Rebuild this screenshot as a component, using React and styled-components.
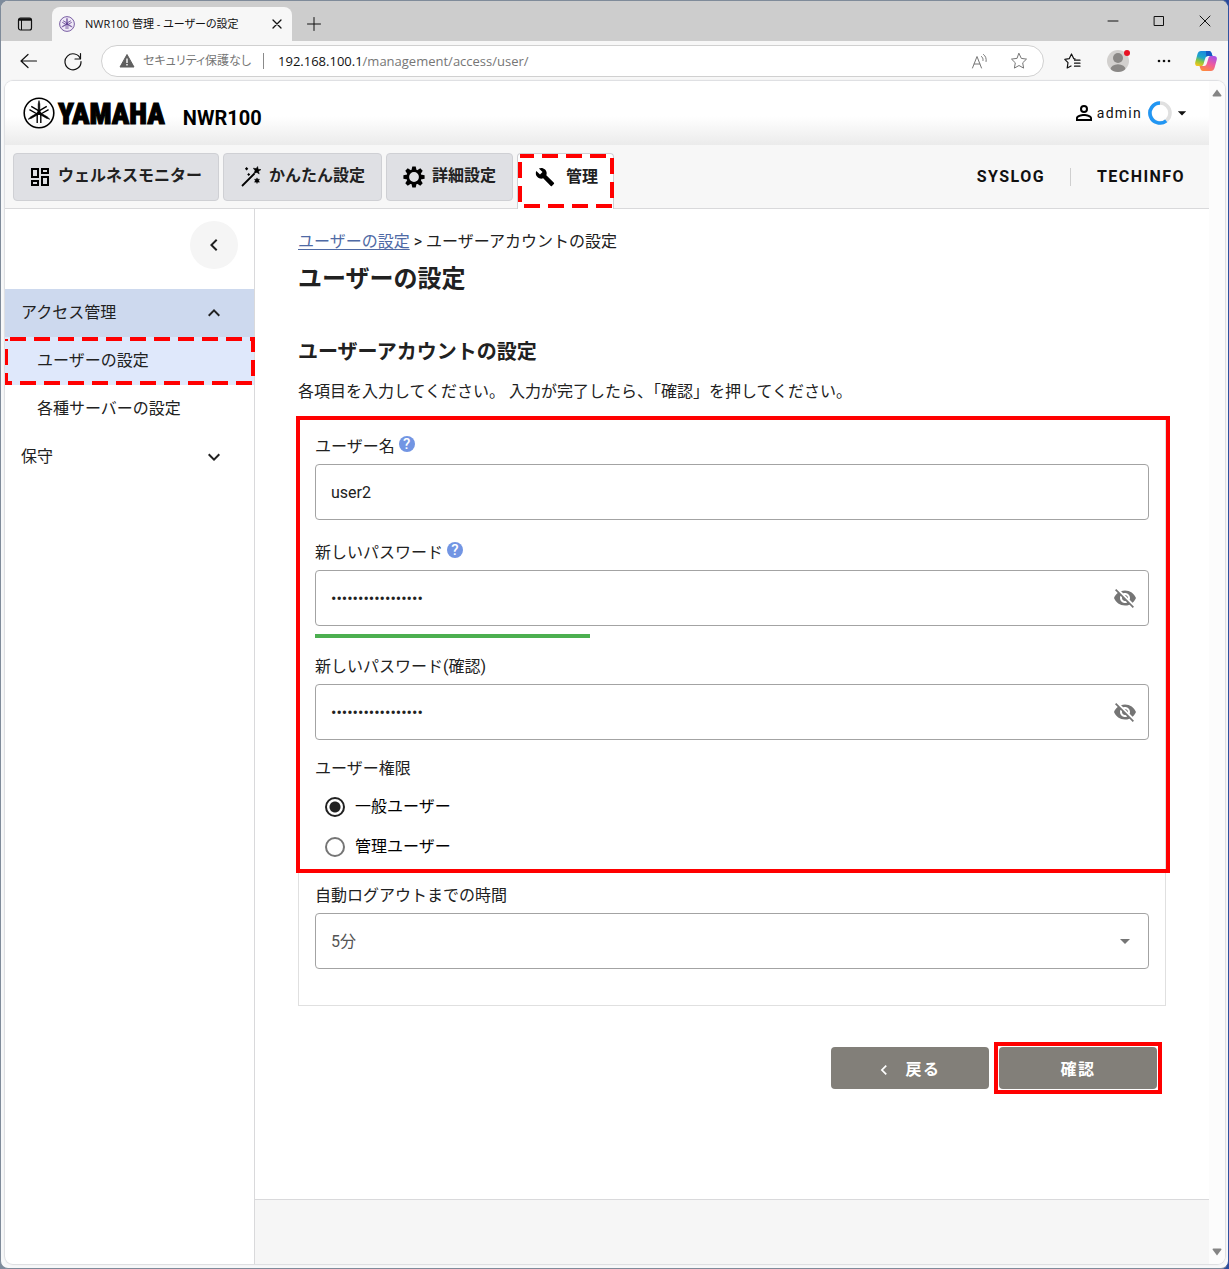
import React, { useState } from "react";
import styled, { createGlobalStyle, css } from "styled-components";

const GlobalStyle = createGlobalStyle`
  *, *::before, *::after { box-sizing: border-box; }
  html, body { margin: 0; padding: 0; }
  body {
    background: linear-gradient(90deg, #7d8b9c 0, #7d8b9c 50%, #2a4a9c 100%);
    color: #212121;
    font: 16px/24px Roboto, "Noto Sans CJK JP", sans-serif;
  }
  button, input, select { font: inherit; color: inherit; margin: 0; }
  button { border: 0; background: none; padding: 0; cursor: pointer; }
  a { color: inherit; text-decoration: none; }
  svg { display: block; flex: none; }
`;

/* ---------- browser chrome ---------- */

const Window = styled.div`
  min-height: 100vh;
  display: flex;
  flex-direction: column;
  background: #f7f8f9;
  border: 1px solid;
  border-color: #7f8b9a #2f52a0 #7f8b9a #7f8b9a;
  border-radius: 8px;
  overflow: hidden;
`;

const TitleBar = styled.div`
  display: flex;
  height: 40px;
  background: #cdcdcd;
  padding-left: 16px;
`;

const TabMenu = styled.button`
  width: 35px;
  padding-top: 6px;
`;

const Tab = styled.div`
  display: flex;
  align-items: center;
  align-self: flex-end;
  width: 240px;
  height: 34px;
  padding: 0 7px;
  border-radius: 8px 8px 0 0;
  background: #f7f7f7;
  gap: 10px;
`;

const TabTitle = styled.span`
  flex: 1;
  font: 11px/16px "Open Sans", "Noto Sans CJK JP", sans-serif;
  font-feature-settings: "palt";
  color: #111;
  white-space: nowrap;
`;

const NewTab = styled.button`
  width: 43px;
  display: grid;
  place-items: center;
  padding-top: 6px;
`;

const WindowButtons = styled.div`
  display: flex;
  margin-left: auto;
`;

const WindowButton = styled.button`
  width: 46px;
  display: grid;
  place-items: center;
`;

const Toolbar = styled.div`
  display: flex;
  align-items: center;
  height: 40px;
  padding: 0 7px 0 18px;
  background: #f7f7f7;
`;

const ToolButton = styled.button`
  width: ${(p) => p.$w}px;
  height: 32px;
  display: flex;
  align-items: center;
  justify-content: ${(p) => (p.$left ? "flex-start" : "center")};
  color: #111;
`;

const AddressBar = styled.div`
  flex: 1;
  display: flex;
  align-items: center;
  height: 32px;
  padding: 0 10px 0 17px;
  border: 1px solid #d0d0d0;
  border-radius: 16px;
  background: #fff;
  color: #767676;
`;

const SiteNotice = styled.span`
  margin-left: 8px;
  padding-right: 12px;
  border-right: 1px solid #8a8a8a;
  font: 12px/16px "Open Sans", "Noto Sans CJK JP", sans-serif;
  font-feature-settings: "palt";
  white-space: nowrap;
`;

const UrlText = styled.span`
  flex: 1;
  margin-left: 14px;
  font: 13px/20px "Open Sans", sans-serif;
  white-space: nowrap;
  b { font-weight: 400; color: #111; }
`;

const AddressIcon = styled.button`
  width: 40px;
  display: flex;
  justify-content: center;
  color: #767676;
  &:last-child { width: 28px; margin-left: 6px; }
`;

/* ---------- page frame ---------- */

const Viewport = styled.div`
  flex: 1;
  display: flex;
  margin: 0 3px 4px 4px;
  border-radius: 8px;
  background: #fff;
  overflow: hidden;
  box-shadow: 0 0 1px 1px #dcdde0;
`;

const Page = styled.div`
  flex: 1;
  min-width: 0;
  display: flex;
  flex-direction: column;
`;

const ScrollTrack = styled.div`
  width: 16px;
  display: flex;
  flex-direction: column;
  justify-content: space-between;
  align-items: center;
  padding: 8px 0;
  background: #fcfcfc;
`;

const Header = styled.header`
  display: flex;
  align-items: center;
  height: 64px;
  padding: 0 17px 0 18px;
  background: linear-gradient(#fff 55%, #ebebeb);
`;

const Wordmark = styled.span`
  margin-left: 3px;
  padding-top: 2px;
  font: 900 29px/40px "Liberation Sans Narrow", "Roboto Condensed", "Open Sans Condensed", "Noto Sans CJK JP", sans-serif;
  color: #000;
  -webkit-text-stroke: 1px #000;
`;

const ModelName = styled.span`
  margin: 10px 0 0 18px;
  font-size: 20px;
  font-weight: 700;
  color: #000;
`;

const UserMenu = styled.button`
  display: flex;
  align-items: center;
  margin-left: auto;
  font-size: 14px;
  letter-spacing: 0.09em;
  color: #111;
`;

const UserName = styled.span`
  margin: 0 6px 0 1px;
`;

const NavBar = styled.nav`
  display: flex;
  height: 64px;
  padding: 8px 24px 0 8px;
  gap: 4px;
  border-bottom: 1px solid #d9d9db;
  background: #f7f7f7;
`;

const NavItem = styled.a`
  position: relative;
  display: flex;
  align-items: center;
  gap: 6px;
  height: 48px;
  padding: 0 16px 2px 14px;
  border: 1px solid #cfd0d4;
  border-radius: 4px;
  background: #dfe0e4;
  font-weight: 700;
  color: #212121;
  white-space: nowrap;
  svg { margin-top: 1px; color: #000; }
  ${(p) =>
    p.$wide &&
    css`
      padding-left: 15px;
    `}
  ${(p) =>
    p.$active &&
    css`
      height: 56px;
      gap: 11px;
      padding: 0 15px 10px 17px;
      border-bottom: 0;
      border-radius: 4px 4px 0 0;
      background: #fff;
    `}
`;

const NavLinks = styled.div`
  display: flex;
  align-items: center;
  height: 48px;
  margin-left: auto;
`;

const NavLink = styled.a`
  font-weight: 700;
  letter-spacing: 0.09em;
  color: #111;
`;

const NavDivider = styled.span`
  width: 1px;
  height: 18px;
  margin: 0 26px 0 25px;
  background: #cfcfcf;
`;

const Body = styled.div`
  flex: 1;
  display: flex;
`;

const Sidebar = styled.aside`
  width: 250px;
  flex: none;
  display: flex;
  flex-direction: column;
  padding-top: 12px;
  border-right: 1px solid #d9d9db;
`;

const Collapse = styled.button`
  align-self: flex-end;
  display: grid;
  place-items: center;
  width: 48px;
  height: 48px;
  margin: 0 16px 20px 0;
  border-radius: 50%;
  background: #f5f5f5;
`;

const SideGroup = styled.button`
  display: flex;
  align-items: center;
  justify-content: space-between;
  height: 48px;
  padding: 0 28px 0 16px;
  background: ${(p) => (p.$open ? "#cdd9ee" : "transparent")};
`;

const SideLink = styled.a`
  position: relative;
  display: flex;
  align-items: center;
  height: 48px;
  padding-left: 32px;
  background: ${(p) => (p.$current ? "#dfe8fb" : "transparent")};
`;

const Column = styled.div`
  flex: 1;
  min-width: 0;
  display: flex;
  flex-direction: column;
`;

const Main = styled.main`
  flex: 1;
  padding: 21px 43px 40px;
`;

const Footer = styled.footer`
  height: 65px;
  border-top: 1px solid #d9d9db;
  background: #f6f6f6;
`;

/* ---------- form ---------- */

const CrumbLink = styled.a`
  color: #4f6aa5;
  text-decoration: underline;
  text-underline-offset: 2px;
`;

const Title = styled.h1`
  margin: 8px 0 0;
  font-size: 24px;
  line-height: 34px;
`;

const Subtitle = styled.h2`
  margin: 40px 0 0;
  font-size: 20px;
  line-height: 32px;
`;

const Lead = styled.p`
  margin: 12px 0 0;
`;

const Card = styled.form`
  margin-top: 14px;
  padding: 0 16px 36px;
  border: 1px solid #e0e0e0;
`;

const MarkedFields = styled.div`
  position: relative;
  padding: 16px 0 0;
`;

const Field = styled.div`
  margin-top: ${(p) => p.$gap || 0}px;
`;

const LabelRow = styled.div`
  display: flex;
  gap: 4px;
  height: 24px;
  margin-bottom: 5px;
`;

const Help = styled.button`
  display: grid;
  place-items: center;
  width: 16px;
  height: 16px;
  margin-top: 1px;
  border-radius: 50%;
  background: #7295e3;
  color: #fff;
  font: 500 15px/16px Roboto, sans-serif;
`;

const Control = styled.div`
  display: flex;
  align-items: center;
  height: 56px;
  padding-right: 11px;
  border: 1px solid #a3a3a3;
  border-radius: 4px;
  color: #757575;
`;

const TextInput = styled.input`
  flex: 1;
  min-width: 0;
  height: 54px;
  padding: 0 15px;
  border: 0;
  outline: 0;
  background: none;
  color: #212121;
`;

const Select = styled.select`
  flex: 1;
  height: 54px;
  padding: 2px 15px 0;
  margin-right: -24px;
  border: 0;
  outline: 0;
  appearance: none;
  background: none;
  color: #555;
`;

const Strength = styled.div`
  width: 33%;
  height: 4px;
  margin-top: 8px;
  background: #4caf50;
`;

const RadioGroup = styled.fieldset`
  margin: 17px 0 0;
  padding: 0;
  border: 0;
`;

const Legend = styled.legend`
  padding: 0 0 5px;
`;

const RadioRow = styled.label`
  display: flex;
  align-items: center;
  gap: 10px;
  height: 40px;
  padding: 2px 0 0 10px;
  color: #000;
`;

const Radio = styled.input`
  appearance: none;
  width: 20px;
  height: 20px;
  margin: 0;
  border: 2px solid #757575;
  border-radius: 50%;
  &:checked {
    border-color: #212121;
    background: radial-gradient(#212121 5px, transparent 6px);
  }
`;

const Actions = styled.div`
  display: flex;
  justify-content: flex-end;
  gap: 10px;
  margin: 41px 9px 0 0;
`;

const ActionButton = styled.button`
  position: relative;
  display: flex;
  align-items: center;
  justify-content: center;
  gap: 12px;
  width: 158px;
  height: 42px;
  padding: 3px ${(p) => (p.$back ? 6 : 0)}px 0 0;
  border-radius: 4px;
  background: #827f79;
  color: #fff;
  font-weight: 700;
  letter-spacing: 0.09em;
`;

/* ---------- red markers ---------- */

const SolidMark = styled.span`
  position: absolute;
  inset: ${(p) => p.$inset};
  border: 4px solid #f00;
  pointer-events: none;
`;

const MarkSvg = styled.svg`
  && {
    position: absolute;
    inset: ${(p) => p.$inset};
    margin: 0;
    overflow: visible;
    pointer-events: none;
    z-index: 1;
  }
`;

const DashedMark = ({ inset, w, h, offset }) => (
  <MarkSvg $inset={inset} width={w} height={h} aria-hidden="true">
    <rect x="2" y="2" width={w - 4} height={h - 4} fill="none" stroke="#f00" strokeWidth="4" strokeDasharray="16 8" strokeDashoffset={offset} />
  </MarkSvg>
);

/* ---------- icons ---------- */

const Glyph = ({ d, size = 24, color = "currentColor" }) => (
  <svg width={size} height={size} viewBox="0 0 24 24" fill={color} aria-hidden="true">
    <path d={d} />
  </svg>
);

const Line = ({ d, size = 16, box = 16, w = 1, color = "currentColor" }) => (
  <svg width={size} height={size} viewBox={`0 0 ${box} ${box}`} fill="none" stroke={color} strokeWidth={w} strokeLinecap="round" strokeLinejoin="round" aria-hidden="true">
    <path d={d} />
  </svg>
);

const paths = {
  dashboard: "M19,5V7H15V5H19M9,5V11H5V5H9M19,13V19H15V13H19M9,17V19H5V17H9M21,3H13V9H21V3M11,3H3V13H11V3M21,11H13V21H21V11M11,15H3V21H11V15Z",
  wrench: "M22.7,19L13.6,9.9C14.5,7.6 14,4.9 12.1,3C10.1,1 7.1,0.6 4.7,1.7L9,6L6,9L1.6,4.7C0.4,7.1 0.9,10.1 2.9,12.1C4.8,14 7.5,14.5 9.8,13.6L18.9,22.7C19.3,23.1 19.9,23.1 20.3,22.7L22.6,20.4C23.1,20 23.1,19.3 22.7,19Z",
  account: "M12,4A4,4 0 0,1 16,8A4,4 0 0,1 12,12A4,4 0 0,1 8,8A4,4 0 0,1 12,4M12,6A2,2 0 0,0 10,8A2,2 0 0,0 12,10A2,2 0 0,0 14,8A2,2 0 0,0 12,6M12,13C14.67,13 20,14.33 20,17V20H4V17C4,14.33 9.33,13 12,13M12,14.9C9.03,14.9 5.9,16.36 5.9,17V18.1H18.1V17C18.1,16.36 14.97,14.9 12,14.9Z",
  eyeOff: "M12 7c2.76 0 5 2.24 5 5 0 .65-.13 1.26-.36 1.83l2.92 2.92c1.51-1.26 2.7-2.89 3.43-4.75-1.73-4.39-6-7.5-11-7.5-1.4 0-2.74.25-3.98.7l2.16 2.16C10.74 7.13 11.35 7 12 7zM2 4.27l2.28 2.28.46.46C3.08 8.3 1.78 10.02 1 12c1.73 4.39 6 7.5 11 7.5 1.55 0 3.03-.3 4.38-.84l.42.42L19.73 22 21 20.73 3.27 3 2 4.27zM7.53 9.8l1.55 1.55c-.05.21-.08.43-.08.65 0 1.66 1.34 3 3 3 .22 0 .44-.03.65-.08l1.55 1.55c-.67.33-1.41.53-2.2.53-2.76 0-5-2.24-5-5 0-.79.2-1.53.53-2.2zm4.31-.78l3.15 3.15.02-.16c0-1.66-1.34-3-3-3l-.17.01z",
  left: "M15.41,16.58L10.83,12L15.41,7.41L14,6L8,12L14,18L15.41,16.58Z",
  up: "M7.41,15.41L12,10.83L16.59,15.41L18,14L12,8L6,14L7.41,15.41Z",
  down: "M7.41,8.58L12,13.17L16.59,8.58L18,10L12,16L6,10L7.41,8.58Z",
  caret: "M7,10L12,15L17,10H7Z",
};

const GearIcon = () => (
  <svg width="24" height="24" viewBox="0 0 24 24" aria-hidden="true">
    <g fill="#000">
      {[0, 45, 90, 135].map((a) => (
        <path key={a} d="M10.3 1.4h3.400l.9 4v13.200l-.9 4h-3.400l-.9-4V5.400z" transform={`rotate(${a} 12 12)`} />
      ))}
    </g>
    <circle cx="12" cy="12" r="6.2" fill="#dfe0e4" stroke="#000" strokeWidth="2.6" />
  </svg>
);

const WandIcon = () => (
  <svg width="24" height="24" viewBox="0 0 24 24" aria-hidden="true">
    <path d="M3 21L15.500 8.500" stroke="#000" strokeWidth="1.800" fill="none" />
    <path d="M18.600 1.500l.6 2.800 2.800.3-2.400 1.600.6 2.900-2.300-1.700-2.900 1 1-2.900L14.300 3.200l2.900.4z" stroke="#000" strokeWidth="0.500" />
    <path d="M18 12.800l.8 1.500 1.700-.1-.8 1.500.8 1.500-1.700-.1-.8 1.500-.8-1.500-1.700.1.8-1.500-.8-1.500 1.700.1z" stroke="#000" strokeWidth="0.400" />
    <path d="M7.600 2l1.700 1.700-1.700 1.700-1.700-1.700zM9.700 8l1.500 1.500-1.500 1.500-1.500-1.500z" />
  </svg>
);

/* Three crossed tuning forks inside a ring */
const ForkMark = ({ size, color, fill = "none" }) => (
  <svg width={size} height={size} viewBox="0 0 32 32" fill="none" stroke={color} aria-hidden="true">
    <circle cx="16" cy="16" r="14.8" strokeWidth="1.6" fill={fill} />
    {[0, 120, 240].map((a) => (
      <g key={a} transform={`rotate(${a} 16 16)`}>
        <path d="M16 3.600L15.200 7v8h1.600V7z" fill={color} strokeWidth="0.600" />
        <path d="M16 14v2.600M14.200 26V18.600C14.200 16.600 17.800 16.600 17.800 18.600V26" strokeWidth="1.400" />
      </g>
    ))}
  </svg>
);

const Spinner = () => (
  <svg width="24" height="24" viewBox="0 0 24 24" fill="none" strokeWidth="3.6" aria-hidden="true">
    <circle cx="12" cy="12" r="10" stroke="#e0e0e0" />
    <path d="M12 2A10 10 0 1 0 18.2 19.8" stroke="#2196f3" />
  </svg>
);

const Avatar = () => (
  <svg width="24" height="26" viewBox="0 0 24 26" aria-hidden="true">
    <clipPath id="avatar-clip"><circle cx="11" cy="13" r="11" /></clipPath>
    <circle cx="11" cy="13" r="11" fill="#d2d0ce" />
    <g clipPath="url(#avatar-clip)" fill="#8a8886">
      <circle cx="11" cy="10" r="5" />
      <ellipse cx="11" cy="21.5" rx="7.6" ry="5.2" />
    </g>
    <circle cx="20" cy="5" r="3" fill="#e81123" />
  </svg>
);

const Copilot = () => (
  <svg width="22" height="20" viewBox="0 0 22 20" aria-hidden="true">
    <defs>
      <linearGradient id="cp-a" x1="0.6" y1="0" x2="0.2" y2="1">
        <stop offset="0" stopColor="#1b86e0" />
        <stop offset="0.45" stopColor="#1fa8c9" />
        <stop offset="0.7" stopColor="#8cc63f" />
        <stop offset="1" stopColor="#f6c51c" />
      </linearGradient>
      <linearGradient id="cp-b" x1="0.8" y1="0" x2="0.3" y2="1">
        <stop offset="0" stopColor="#a650e8" />
        <stop offset="0.5" stopColor="#ef5a9d" />
        <stop offset="1" stopColor="#ff8a3c" />
      </linearGradient>
    </defs>
    <path d="M6 0h8c1.600 0 2.200 1 2.700 2.500L17.500 5H13C11 5 10.500 6.500 10 8L8.500 13C8 14.500 7.400 15 6 15H3C.5 15-.3 13.500.3 11L2.500 3C3.100 1 4.200 0 6 0z" fill="url(#cp-a)" />
    <path d="M16 20H8c-1.600 0-2.200-1-2.700-2.500L4.500 15H9c2 0 2.500-1.500 3-3L13.500 7C14 5.500 14.600 5 16 5h3c2.500 0 3.300 1.500 2.700 4L19.500 17c-.6 2-1.700 3-3.500 3z" fill="url(#cp-b)" />
    <path d="M11 0h3c1.600 0 2.200 1 2.700 2.500L17.500 5H13c-.8 0-1.400.2-1.800.7z" fill="#1659c4" />
  </svg>
);

const PasswordField = ({ id, label, gap, help, children }) => {
  const [shown, setShown] = useState(false);
  return (
    <Field $gap={gap}>
      <LabelRow>
        <label htmlFor={id}>{label}</label>
        {help && <Help type="button" aria-label="ヘルプ">?</Help>}
      </LabelRow>
      <Control>
        <TextInput id={id} type={shown ? "text" : "password"} defaultValue="password123456789" />
        <button type="button" aria-label="パスワードを表示" onClick={() => setShown(!shown)}>
          <Glyph d={paths.eyeOff} />
        </button>
      </Control>
      {children}
    </Field>
  );
};

export default function App() {
  const [role, setRole] = useState("general");
  return (
    <>
      <GlobalStyle />
      <Window>
        <TitleBar>
          <TabMenu aria-label="タブ操作">
            <svg width="16" height="16" viewBox="0 0 16 16" fill="none" stroke="#111" aria-hidden="true">
              <rect x="1.500" y="2" width="13" height="12" rx="2" strokeWidth="1.200" />
              <path d="M2 3.500h12" strokeWidth="2.500" />
              <path d="M4.500 4v10" />
            </svg>
          </TabMenu>
          <Tab>
            <ForkMark size={16} color="#5b3a8e" fill="#efe9f7" />
            <TabTitle>NWR100 管理 - ユーザーの設定</TabTitle>
            <button aria-label="タブを閉じる"><Line d="M4 4l8 8M12 4l-8 8" w={1.3} color="#111" /></button>
          </Tab>
          <NewTab aria-label="新しいタブ"><Line d="M8 1.500v13M1.500 8h13" color="#111" /></NewTab>
          <WindowButtons>
            <WindowButton aria-label="最小化"><Line d="M3 8h10" color="#111" /></WindowButton>
            <WindowButton aria-label="最大化"><Line d="M3.500 3.500h9v9h-9z" color="#111" /></WindowButton>
            <WindowButton aria-label="閉じる"><Line d="M3 3l10 10M13 3l-10 10" color="#111" /></WindowButton>
          </WindowButtons>
        </TitleBar>

        <Toolbar>
          <ToolButton $w={44} $left aria-label="戻る"><Line d="M2 10h15.500M9 3.500L2 10l7 6.500" size={20} box={20} w={1.2} /></ToolButton>
          <ToolButton $w={38} $left aria-label="更新"><Line d="M17.500 8A8 8 0 1 0 18 10.500M17.500 2.500V8H12" size={20} box={20} w={1.2} /></ToolButton>
          <AddressBar>
            <svg width="16" height="16" viewBox="0 0 16 16" aria-hidden="true">
              <path d="M8 1.500L15 14H1z" fill="#5f5f5f" stroke="#5f5f5f" strokeLinejoin="round" />
              <path d="M8 5.500v4.500M8 11v1.500" stroke="#fff" strokeWidth="1.400" />
            </svg>
            <SiteNotice>セキュリティ保護なし</SiteNotice>
            <UrlText><b>192.168.100.1</b>/management/access/user/</UrlText>
            <AddressIcon aria-label="音声で読み上げる">
              <Line d="M1.500 15L6 3.500 10.500 15M3.200 11h5.600M10.500 3.500c1.200.9 1.700 2.300 1.500 4M12.500 1.500c2.200 1.600 3 4 2.600 7" size={17} box={17} />
            </AddressIcon>
            <AddressIcon aria-label="お気に入りに追加">
              <Line d="M9 1.500l2.300 4.900 5.200.7-3.800 3.700.9 5.300L9 13.500l-4.600 2.600.9-5.300L1.500 7.100l5.200-.7z" size={18} box={18} />
            </AddressIcon>
          </AddressBar>
          <ToolButton $w={56} aria-label="お気に入り">
            <Line d="M11 5.800L9.800 5.700 7.500 1 5.200 5.700.8 6.400 4 9.700l-.8 5.300 3.800-2M10.500 7.200H16M10.500 10.200H16M10.500 13.200H16" size={17} box={17} w={1.2} />
          </ToolButton>
          <ToolButton $w={38} aria-label="プロファイル"><Avatar /></ToolButton>
          <ToolButton $w={52} aria-label="設定など">
            <svg width="16" height="16" viewBox="0 0 16 16" fill="#111" aria-hidden="true">
              <circle cx="3" cy="8" r="1.300" /><circle cx="8" cy="8" r="1.300" /><circle cx="13" cy="8" r="1.300" />
            </svg>
          </ToolButton>
          <ToolButton $w={31} aria-label="Copilot"><Copilot /></ToolButton>
        </Toolbar>

        <Viewport>
          <Page>
            <Header>
              <ForkMark size={32} color="#000" />
              <Wordmark>YAMAHA</Wordmark>
              <ModelName>NWR100</ModelName>
              <UserMenu>
                <Glyph d={paths.account} size={24} color="#000" />
                <UserName>admin</UserName>
                <Spinner />
                <Glyph d={paths.caret} size={20} />
              </UserMenu>
            </Header>

            <NavBar>
              <NavItem href="#wellness"><Glyph d={paths.dashboard} />ウェルネスモニター</NavItem>
              <NavItem href="#easy" $wide><WandIcon />かんたん設定</NavItem>
              <NavItem href="#detail" $wide><GearIcon />詳細設定</NavItem>
              <NavItem href="#management" $active>
                <Glyph d={paths.wrench} size={20} />管理
                <DashedMark inset="0 auto auto 0" w={96} h={54} offset={2} />
              </NavItem>
              <NavLinks>
                <NavLink href="#syslog">SYSLOG</NavLink>
                <NavDivider />
                <NavLink href="#techinfo">TECHINFO</NavLink>
              </NavLinks>
            </NavBar>

            <Body>
              <Sidebar>
                <Collapse aria-label="メニューを閉じる"><Glyph d={paths.left} /></Collapse>
                <SideGroup $open aria-expanded="true">アクセス管理<Glyph d={paths.up} /></SideGroup>
                <SideLink href="#user" $current>
                  ユーザーの設定
                  <DashedMark inset="0 auto auto -1px" w={251} h={48} offset={20} />
                </SideLink>
                <SideLink href="#server">各種サーバーの設定</SideLink>
                <SideGroup aria-expanded="false">保守<Glyph d={paths.down} /></SideGroup>
              </Sidebar>

              <Column>
                <Main>
                  <div>
                    <CrumbLink href="#user">ユーザーの設定</CrumbLink> &gt; ユーザーアカウントの設定
                  </div>
                  <Title>ユーザーの設定</Title>
                  <Subtitle>ユーザーアカウントの設定</Subtitle>
                  <Lead>各項目を入力してください。 入力が完了したら、「確認」を押してください。</Lead>

                  <Card id="account" onSubmit={(e) => e.preventDefault()}>
                    <MarkedFields>
                      <SolidMark $inset="-3px -21px -7px -19px" />
                      <Field>
                        <LabelRow>
                          <label htmlFor="username">ユーザー名</label>
                          <Help type="button" aria-label="ヘルプ">?</Help>
                        </LabelRow>
                        <Control><TextInput id="username" type="text" defaultValue="user2" /></Control>
                      </Field>
                      <PasswordField id="password" label="新しいパスワード" gap={21} help>
                        <Strength />
                      </PasswordField>
                      <PasswordField id="confirm" label="新しいパスワード(確認)" gap={17} />
                      <RadioGroup>
                        <Legend>ユーザー権限</Legend>
                        <RadioRow>
                          <Radio type="radio" name="role" checked={role === "general"} onChange={() => setRole("general")} />
                          一般ユーザー
                        </RadioRow>
                        <RadioRow>
                          <Radio type="radio" name="role" checked={role === "admin"} onChange={() => setRole("admin")} />
                          管理ユーザー
                        </RadioRow>
                      </RadioGroup>
                    </MarkedFields>
                    <Field $gap={18}>
                      <LabelRow><label htmlFor="timeout">自動ログアウトまでの時間</label></LabelRow>
                      <Control>
                        <Select id="timeout" defaultValue="5">
                          <option value="5">5分</option>
                          <option value="10">10分</option>
                        </Select>
                        <Glyph d={paths.caret} />
                      </Control>
                    </Field>
                  </Card>

                  <Actions>
                    <ActionButton type="button" $back><Glyph d={paths.left} size={20} />戻る</ActionButton>
                    <ActionButton type="submit" form="account">
                      確認
                      <SolidMark $inset="-5px" />
                    </ActionButton>
                  </Actions>
                </Main>
                <Footer />
              </Column>
            </Body>
          </Page>
          <ScrollTrack>
            <svg width="10" height="8" viewBox="0 0 10 8" fill="#858585" aria-hidden="true"><path d="M5 0.500L9.500 6.500Q9.500 7.500 8.500 7.500H1.500Q.5 7.500.5 6.500z" /></svg>
            <svg width="10" height="8" viewBox="0 0 10 8" fill="#858585" aria-hidden="true"><path d="M5 7.500L9.500 1.500Q9.500.5 8.500.5H1.500Q.5.5.5 1.500z" /></svg>
          </ScrollTrack>
        </Viewport>
      </Window>
    </>
  );
}
